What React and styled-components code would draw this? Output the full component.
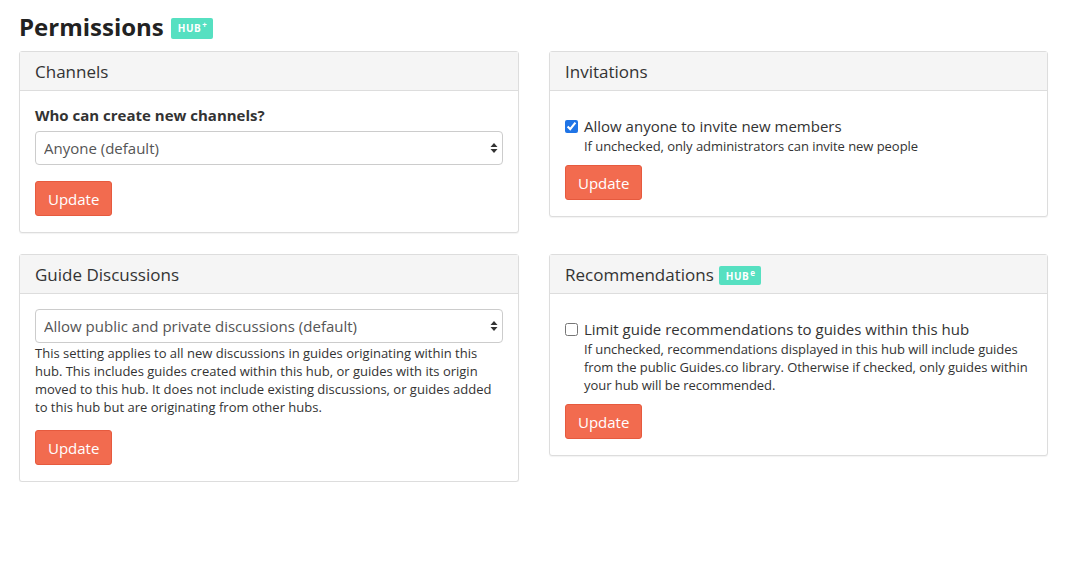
import React from 'react';
import styled, { createGlobalStyle } from 'styled-components';

const GlobalStyle = createGlobalStyle`
  body {
    margin: 0;
    background: #fff;
    font-family: "Open Sans", "Liberation Sans", sans-serif;
    color: #333;
  }
`;

const Page = styled.div`
  padding: 10px 18px 0 19px;
  width: 1029px;
`;

const Title = styled.h1`
  display: flex;
  align-items: center;
  gap: 7px;
  margin: 0 0 7px;
  font-size: 24px;
  font-weight: 700;
  color: #222;
  line-height: 34px;
`;

const Badge = styled.span`
  display: inline-flex;
  align-items: flex-start;
  background: #56e0c1;
  color: #fff;
  font-size: 10px;
  font-weight: 700;
  letter-spacing: 0.5px;
  line-height: 12px;
  padding: ${(p) => (p.$small ? '4px 6px 3px 7px' : '4px 6px 5px 7px')};
  border-radius: 2px;
  margin-top: 2px;
  sup {
    font-size: 8px;
    line-height: 8px;
    margin-left: 1px;
    margin-top: -1px;
  }
`;

const Grid = styled.div`
  display: grid;
  grid-template-columns: 500px 499px;
  column-gap: 30px;
  row-gap: 21px;
  align-items: start;
`;

const Panel = styled.section`
  border: 1px solid #ddd;
  border-radius: 3px;
  box-shadow: 0 1px 1px rgba(0, 0, 0, 0.05);
  background: #fff;
`;

const PanelHeader = styled.div`
  display: flex;
  align-items: center;
  gap: 5px;
  height: 38px;
  padding: 0 15px;
  background: #f5f5f5;
  border-bottom: 1px solid #ddd;
  font-size: 17px;
  color: #333;
`;

const PanelBody = styled.div`
  padding: ${(p) => p.$top || 15}px 15px 16px;
`;

const Label = styled.div`
  font-size: 15px;
  font-weight: 700;
  line-height: 20px;
  margin-bottom: 6px;
`;

const SelectWrap = styled.div`
  position: relative;
`;

const Select = styled.select`
  width: 100%;
  height: 34px;
  appearance: none;
  border: 1px solid #ccc;
  border-radius: 4px;
  background: #fff;
  padding: 0 8px;
  font-family: inherit;
  font-size: 15px;
  color: #555;
`;

const Arrows = styled.svg`
  position: absolute;
  right: 4px;
  top: 11px;
  pointer-events: none;
`;

const Help = styled.p`
  margin: 1px 0 0;
  font-size: 13px;
  line-height: 18px;
  color: #333;
`;

const Button = styled.button`
  display: block;
  margin-top: ${(p) => p.$mt || 15}px;
  height: 35px;
  padding: 0 12px;
  background: #f26b4f;
  border: 1px solid #e65a3e;
  border-radius: 3px;
  color: #fff;
  font-family: inherit;
  font-size: 15px;
`;

const CheckRow = styled.label`
  display: flex;
  gap: 6px;
  align-items: flex-start;
`;

const Check = styled.input`
  width: 13px;
  height: 13px;
  margin: 4px 0 0 0;
  accent-color: #1f74e6;
`;

const CheckTitle = styled.div`
  font-size: 15px;
  line-height: 20px;
`;

const CheckHelp = styled.div`
  font-size: 13px;
  line-height: 18px;
  margin-top: 1px;
  letter-spacing: -0.05px;
`;

const SelectField = ({ value }) => (
  <SelectWrap>
    <Select defaultValue={value}>
      <option>{value}</option>
    </Select>
    <Arrows width="10" height="12" viewBox="0 0 10 12">
      <path d="M5 1 L8.5 5 L1.5 5 Z" fill="#333" />
      <path d="M5 11 L8.5 7 L1.5 7 Z" fill="#333" />
    </Arrows>
  </SelectWrap>
);

const App = () => (
  <Page>
    <GlobalStyle />
    <Title>
      Permissions
      <Badge>
        HUB<sup>+</sup>
      </Badge>
    </Title>
    <Grid>
      <Panel>
        <PanelHeader>Channels</PanelHeader>
        <PanelBody $top={14}>
          <Label>Who can create new channels?</Label>
          <SelectField value="Anyone (default)" />
          <Button $mt={16}>Update</Button>
        </PanelBody>
      </Panel>
      <Panel>
        <PanelHeader>Invitations</PanelHeader>
        <PanelBody $top={25}>
          <CheckRow>
            <Check type="checkbox" defaultChecked />
            <div>
              <CheckTitle>Allow anyone to invite new members</CheckTitle>
              <CheckHelp>If unchecked, only administrators can invite new people</CheckHelp>
            </div>
          </CheckRow>
          <Button $mt={10}>Update</Button>
        </PanelBody>
      </Panel>
      <Panel>
        <PanelHeader>Guide Discussions</PanelHeader>
        <PanelBody $top={15}>
          <SelectField value="Allow public and private discussions (default)" />
          <Help>
            This setting applies to all new discussions in guides originating within this
            hub. This includes guides created within this hub, or guides with its origin
            moved to this hub. It does not include existing discussions, or guides added
            to this hub but are originating from other hubs.
          </Help>
          <Button $mt={14}>Update</Button>
        </PanelBody>
      </Panel>
      <Panel>
        <PanelHeader>
          Recommendations
          <Badge $small>
            HUB<sup>e</sup>
          </Badge>
        </PanelHeader>
        <PanelBody $top={25}>
          <CheckRow>
            <Check type="checkbox" />
            <div>
              <CheckTitle>Limit guide recommendations to guides within this hub</CheckTitle>
              <CheckHelp>
                If unchecked, recommendations displayed in this hub will include guides
                from the public Guides.co library. Otherwise if checked, only guides within
                your hub will be recommended.
              </CheckHelp>
            </div>
          </CheckRow>
          <Button $mt={10}>Update</Button>
        </PanelBody>
      </Panel>
    </Grid>
  </Page>
);

export default App;
